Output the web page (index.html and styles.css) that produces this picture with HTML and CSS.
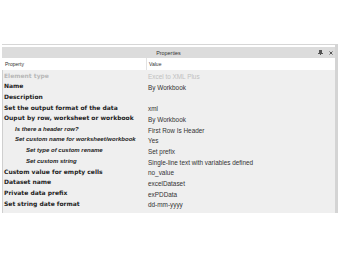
FILE: index.html
```html
<!DOCTYPE html>
<html lang="en">
<head>
    <meta charset="UTF-8">
    <title>Properties</title>
    <link rel="stylesheet" href="styles.css">
</head>
<body>
    <div class="panel">
        <div class="titlebar">
            <span class="title">Properties</span>
            <span class="tools">
                <svg class="pin" width="5" height="5" viewBox="0 0 5 5"><path d="M1 0h3v3H1z M0 3h5v1H0z M2 4h1v1H2z" fill="#555"/></svg>
                <svg class="close" width="4" height="4" viewBox="0 0 4 4"><path d="M0.5 0.5l3 3M3.5 0.5l-3 3" stroke="#555" stroke-width="1"/></svg>
            </span>
        </div>
        <div class="head-row">
            <div class="col-name">Property</div>
            <div class="col-value">Value</div>
        </div>
        <div class="rows">
            <div class="row muted"><div class="name">Element type</div><div class="value">Excel to XML Plus</div></div>
            <div class="row"><div class="name">Name</div><div class="value">By Workbook</div></div>
            <div class="row"><div class="name">Description</div><div class="value"></div></div>
            <div class="row"><div class="name">Set the output format of the data</div><div class="value">xml</div></div>
            <div class="row"><div class="name">Ouput by row, worksheet or workbook</div><div class="value">By Workbook</div></div>
            <div class="row"><div class="name sub1">Is there a header row?</div><div class="value">First Row Is Header</div></div>
            <div class="row"><div class="name sub1">Set custom name for worksheet/workbook</div><div class="value">Yes</div></div>
            <div class="row"><div class="name sub2">Set type of custom rename</div><div class="value">Set prefix</div></div>
            <div class="row"><div class="name sub2">Set custom string</div><div class="value">Single-line text with variables defined</div></div>
            <div class="row"><div class="name">Custom value for empty cells</div><div class="value">no_value</div></div>
            <div class="row"><div class="name">Dataset name</div><div class="value">excelDataset</div></div>
            <div class="row"><div class="name">Private data prefix</div><div class="value">exPDData</div></div>
            <div class="row"><div class="name">Set string date format</div><div class="value">dd-mm-yyyy</div></div>
        </div>
    </div>
</body>
</html>
```
FILE: styles.css
```css
* {
    margin: 0;
    padding: 0;
    box-sizing: border-box;
}

body {
    background: #fff;
    font-family: "DejaVu Sans", sans-serif;
    padding-top: 44px;
}

/* Panel utama */
.panel {
    border-top: 1px solid #d6d6d6;
    margin: 0 2px 0 2px;
    padding-top: 2px;
    border-right: 3px solid #d4d4d4;
}

.titlebar {
    display: flex;
    align-items: center;
    justify-content: center;
    position: relative;
    height: 11px;
    background: #dcdcdc;
}

.title {
    font-family: "Liberation Sans", sans-serif;
    font-size: 5.4px;
    color: #333;
}

.tools {
    position: absolute;
    right: 2px;
    top: 3px;
    display: flex;
    align-items: center;
    gap: 6px;
}

.head-row {
    display: flex;
    height: 12px;
    align-items: center;
    background: #fff;
    font-family: "Liberation Sans", sans-serif;
    font-size: 5px;
    color: #333;
}

.col-name {
    width: 145px;
    padding-left: 3px;
    border-right: 1px solid #e2e2e2;
    height: 100%;
    display: flex;
    align-items: center;
}

.col-value {
    padding-left: 2px;
}

.rows {
    background: #efefef;
    padding: 0 0 4px;
    border-left: 1px solid #cfcfcf;
}

.row {
    display: flex;
    height: 10.67px;
    align-items: center;
}

.name {
    width: 145px;
    padding-left: 1px;
    font-weight: bold;
    font-size: 6px;
    color: #222;
    white-space: nowrap;
}

/* Sub properti: miring dan menjorok */
.name.sub1,
.name.sub2 {
    font-family: "Liberation Sans", sans-serif;
    font-style: italic;
    font-size: 6px;
}

.name.sub1 {
    padding-left: 12px;
}

.name.sub2 {
    padding-left: 23px;
}

.value {
    font-family: "Liberation Sans", sans-serif;
    font-size: 6.4px;
    color: #333;
    white-space: nowrap;
    padding-top: 3px;
}

.row.muted .name {
    color: #b8b8b8;
}

.row.muted .value {
    color: #c0c0c0;
}
```
